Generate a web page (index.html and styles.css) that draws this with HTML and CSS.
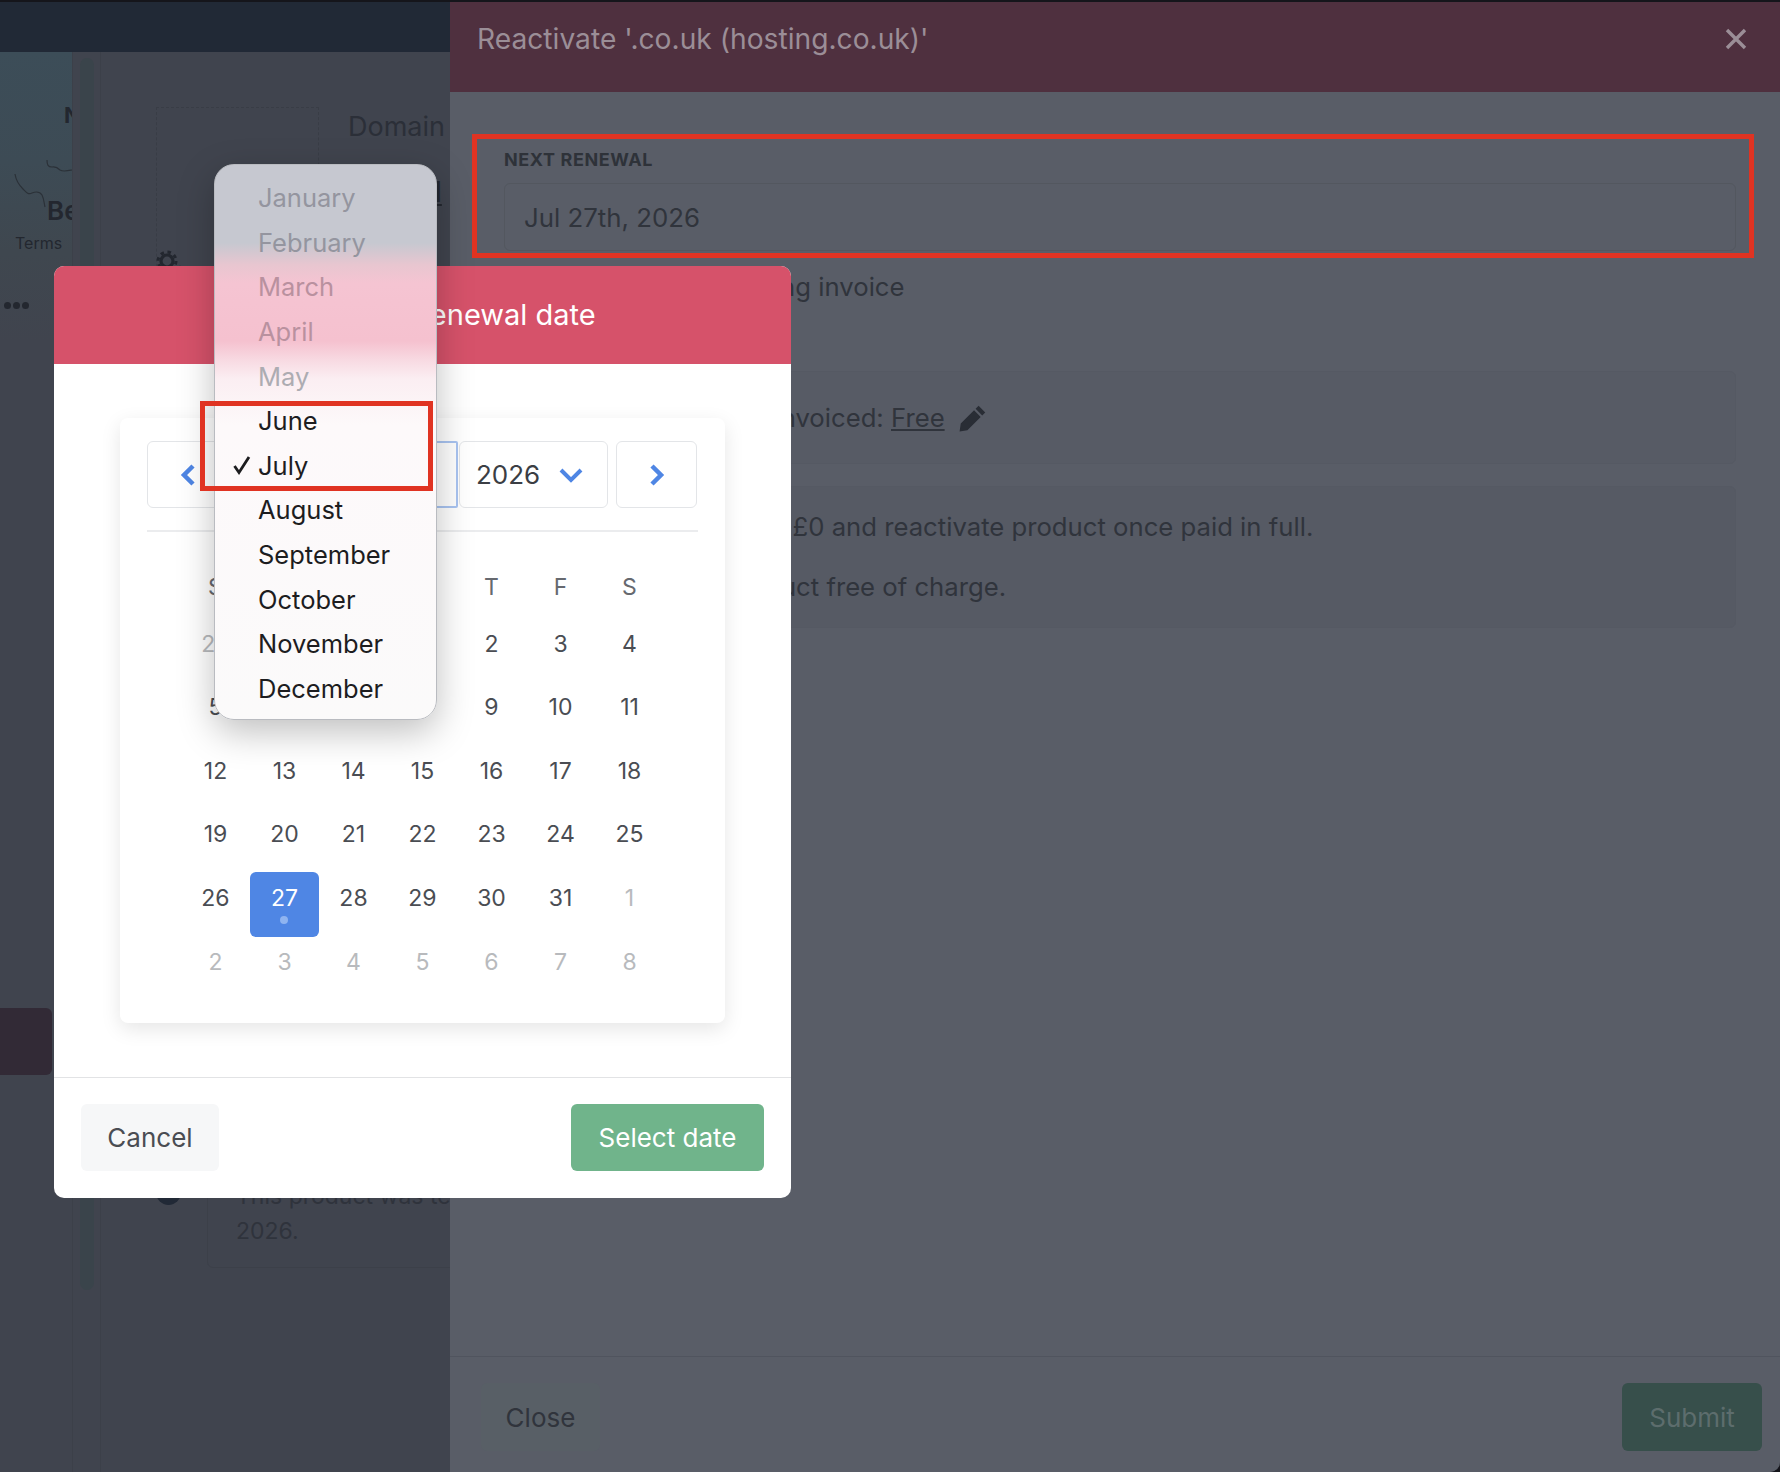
FILE: index.html
```html
<!DOCTYPE html>
<html lang="en">
<head>
  <meta charset="UTF-8">
  <title>Reactivate product</title>
  <link rel="stylesheet" href="styles.css">
</head>
<body>
  <div class="screen">

    <!-- Dimmed page behind the drawer -->
    <div class="backdrop">
      <div class="topbar"></div>
      <div class="backdrop-row">
        <aside class="rail">
          <div class="map">
            <svg class="map-lines" width="72" height="120" viewBox="0 0 72 120" fill="none" stroke="#2b3138" stroke-width="1.2">
              <path d="M15 72c1 7 4 11 8 15 3 3 5 6 9 4 5-2 8-1 10 2 2 4 2 8 3 12"/>
              <path d="M47 58c0 5 1 7 5 7 4-1 6 1 8 3 3 2 7 1 12 0"/>
            </svg>
            <span class="map-n">N</span>
            <span class="map-be">Be</span>
          </div>
          <span class="terms">Terms</span>
          <div class="dots"><i></i><i></i><i></i></div>
          <div class="plum-row"></div>
        </aside>
        <div class="scroll-rail"><div class="scroll-thumb"></div></div>
        <main class="detail">
          <div class="detail-top">
            <div class="dotted">
              <svg class="gear" width="36" height="26" viewBox="0 0 36 26" fill="none" stroke="#23272f">
                <circle cx="11" cy="12" r="6" stroke-width="3.2"/>
                <circle cx="11" cy="12" r="9" stroke-width="3" stroke-dasharray="3.5 3.6"/>
                <circle cx="24" cy="22" r="4" stroke-width="2.6"/>
              </svg>
            </div>
            <div class="detail-title">
              <span class="detail-domain">Domain name</span>
              <span class="detail-link">1</span>
            </div>
          </div>
          <div class="timeline">
            <span class="timeline-dot"></span>
            <div class="timeline-card">This product was terminated on 27 July<br>2026.</div>
          </div>
        </main>
      </div>
    </div>

    <!-- Reactivate drawer -->
    <section class="drawer">
      <header class="drawer-head">
        <h2>Reactivate '.co.uk (hosting.co.uk)'</h2>
        <svg class="drawer-close" width="24" height="24" viewBox="0 0 24 24" fill="none" stroke="#9b8e97" stroke-width="3.4">
          <path d="M3 3l18 18M21 3L3 21"/>
        </svg>
      </header>
      <div class="drawer-body">
        <label class="field-label">NEXT RENEWAL</label>
        <div class="field-input">Jul 27th, 2026</div>
        <p class="option">Generate outstanding invoice</p>
        <div class="panel panel-amount">
          <span>Total amount to be invoiced: <u>Free</u></span>
          <svg width="28" height="28" viewBox="0 0 24 24" fill="#292d35">
            <path d="M16.8 1.5l5.7 5.7-2.6 2.6-5.7-5.7zM12.9 5.4l5.7 5.7L7.2 22.5 0.5 23.5l1-6.7z"/>
          </svg>
        </div>
        <div class="panel panel-options">
          <p>Invoice customer for £0 and reactivate product once paid in full.</p>
          <p>Reactivate this product free of charge.</p>
        </div>
      </div>
      <footer class="drawer-foot">
        <button class="btn-close">Close</button>
        <button class="btn-submit">Submit</button>
      </footer>
    </section>

    <!-- Date picker modal -->
    <div class="modal">
      <header class="modal-head">Select next renewal date</header>
      <div class="modal-body">
        <div class="calendar">
          <div class="cal-nav">
            <button class="cal-arrow">
              <svg width="18" height="24" viewBox="0 0 18 24" fill="none" stroke="#4f86e4" stroke-width="4.5"><path d="M14 3l-9 9 9 9"/></svg>
            </button>
            <div class="cal-month">July</div>
            <div class="cal-year">
              <span>2026</span>
              <svg width="24" height="16" viewBox="0 0 24 16" fill="none" stroke="#4f86e4" stroke-width="4"><path d="M2 3l10 10L22 3"/></svg>
            </div>
            <button class="cal-arrow">
              <svg width="18" height="24" viewBox="0 0 18 24" fill="none" stroke="#4f86e4" stroke-width="4.5"><path d="M4 3l9 9-9 9"/></svg>
            </button>
          </div>
          <div class="cal-grid">
            <span class="wd">S</span><span class="wd">M</span><span class="wd">T</span><span class="wd">W</span><span class="wd">T</span><span class="wd">F</span><span class="wd">S</span>
            <span class="day muted">28</span><span class="day muted">29</span><span class="day muted">30</span><span class="day">1</span><span class="day">2</span><span class="day">3</span><span class="day">4</span>
            <span class="day">5</span><span class="day">6</span><span class="day">7</span><span class="day">8</span><span class="day">9</span><span class="day">10</span><span class="day">11</span>
            <span class="day">12</span><span class="day">13</span><span class="day">14</span><span class="day">15</span><span class="day">16</span><span class="day">17</span><span class="day">18</span>
            <span class="day">19</span><span class="day">20</span><span class="day">21</span><span class="day">22</span><span class="day">23</span><span class="day">24</span><span class="day">25</span>
            <span class="day">26</span><span class="day selected">27</span><span class="day">28</span><span class="day">29</span><span class="day">30</span><span class="day">31</span><span class="day muted">1</span>
            <span class="day muted">2</span><span class="day muted">3</span><span class="day muted">4</span><span class="day muted">5</span><span class="day muted">6</span><span class="day muted">7</span><span class="day muted">8</span>
          </div>
        </div>
      </div>
      <footer class="modal-foot">
        <button class="btn-cancel">Cancel</button>
        <button class="btn-select">Select date</button>
      </footer>
    </div>

    <!-- Native month menu -->
    <ul class="month-menu">
      <li class="faded">January</li>
      <li class="faded">February</li>
      <li class="faded pink">March</li>
      <li class="faded pink">April</li>
      <li class="faded">May</li>
      <li>June</li>
      <li class="checked">
        <svg width="20" height="20" viewBox="0 0 20 20" fill="none" stroke="#1d1d1f" stroke-width="2.8"><path d="M2.5 11l4.5 6.5L17 2"/></svg>
        July
      </li>
      <li>August</li>
      <li>September</li>
      <li>October</li>
      <li>November</li>
      <li>December</li>
    </ul>

    <!-- Red callouts -->
    <div class="callout callout-field"></div>
    <div class="callout callout-month"></div>
  </div>
</body>
</html>
```

FILE: styles.css
```css
* {
  margin: 0;
  padding: 0;
  box-sizing: border-box;
}

body {
  width: 1780px;
  height: 1472px;
  overflow: hidden;
  background-color: #15151b;
  font-family: 'Inter', sans-serif;
}

button {
  font-family: inherit;
  border: none;
}

.screen {
  position: relative;
  display: flex;
  width: 1780px;
  height: 1472px;
  overflow: hidden;
  background-color: #40444e;
  border-top: 2px solid #15151b;
  border-bottom-right-radius: 10px;
}

/* Page behind the drawer */
.backdrop {
  display: flex;
  flex-direction: column;
  flex: 0 0 450px;
  overflow: hidden;
}

.topbar {
  flex: 0 0 50px;
  background-color: #212936;
}

.backdrop-row {
  display: flex;
  flex: 1;
}

.rail {
  display: flex;
  flex-direction: column;
  flex: 0 0 73px;
  overflow: hidden;
  background: linear-gradient(180deg, #3c4d58 0, #3d4b55 110px, #3f474f 200px, #40444e 290px);
  border-right: 1px solid #3c4049;
}

.map {
  position: relative;
  flex: 0 0 178px;
}

.map-lines {
  position: absolute;
  top: 50px;
  left: 0;
}

.map-n,
.map-be {
  position: absolute;
  font-weight: 700;
  color: #23272f;
}

.map-n {
  top: 50px;
  left: 64px;
  font-size: 22px;
}

.map-be {
  top: 143px;
  left: 47px;
  font-size: 26px;
  font-weight: 600;
}

.terms {
  margin: 0 0 0 15px;
  font-size: 16px;
  line-height: 26px;
  color: #23272f;
}

.dots {
  display: flex;
  gap: 2px;
  margin: 46px 0 0 4px;
}

.dots i {
  width: 7px;
  height: 7px;
  border-radius: 50%;
  background-color: #23272f;
}

.plum-row {
  width: 52px;
  height: 67px;
  margin-top: 699px;
  border-radius: 0 6px 6px 0;
  background-color: #322a36;
}

.scroll-rail {
  flex: 0 0 28px;
  padding: 6px 0 0 7px;
  border-right: 1px solid #3c4049;
}

.scroll-thumb {
  width: 14px;
  height: 1232px;
  border-radius: 7px;
  background-color: #3a444b;
}

.detail {
  display: flex;
  flex-direction: column;
  justify-content: space-between;
  flex: 1;
  padding: 55px 0 204px 55px;
}

.detail-top {
  display: flex;
  gap: 29px;
}

.dotted {
  position: relative;
  width: 163px;
  height: 180px;
  border: 1px dashed #393d46;
  border-bottom: none;
}

.gear {
  position: absolute;
  top: 141px;
  left: -1px;
}

.detail-title {
  display: flex;
  flex-direction: column;
  flex: none;
  padding-top: 2px;
  white-space: nowrap;
}

.detail-domain {
  font-size: 27px;
  line-height: 36px;
  color: #2b2f38;
}

.detail-link {
  margin: 32px 0 0 82px;
  font-size: 28px;
  font-weight: 600;
  line-height: 30px;
  color: #23272f;
  text-decoration: underline;
}

.timeline {
  display: flex;
  gap: 26px;
}

.timeline-dot {
  flex: none;
  width: 25px;
  height: 25px;
  margin-top: 24px;
  border-radius: 50%;
  background-color: #212936;
}

.timeline-card {
  flex: none;
  width: 420px;
  padding: 22px 0 18px 28px;
  font-size: 23px;
  line-height: 35px;
  white-space: nowrap;
  color: #2f333c;
  border: 1px solid #3c4049;
  border-radius: 6px;
}

/* Drawer */
.drawer {
  display: flex;
  flex-direction: column;
  flex: 1;
  background-color: #595d67;
}

.drawer-head {
  display: flex;
  align-items: center;
  justify-content: space-between;
  height: 90px;
  padding: 0 32px 16px 27px;
  background-color: #4f303f;
}

.drawer-head h2 {
  font-size: 28.2px;
  font-weight: 400;
  color: #9b8e97;
}

.drawer-body {
  flex: 1;
  padding: 56px 44px 0 54px;
}

.field-label {
  display: block;
  font-size: 18px;
  font-weight: 700;
  line-height: 24px;
  letter-spacing: 0.6px;
  color: #2e3239;
}

.field-input {
  display: flex;
  align-items: center;
  height: 68px;
  margin-top: 11px;
  padding-left: 19px;
  font-size: 25.8px;
  color: #30343c;
  border: 1px solid #53575f;
  border-radius: 6px;
}

.option {
  margin: 18px 0 0 45px;
  font-size: 25.7px;
  line-height: 36px;
  color: #30343c;
}

.panel {
  font-size: 25.7px;
  color: #30343c;
  border: 1px solid #555963;
  border-radius: 6px;
}

.panel-amount {
  display: flex;
  align-items: center;
  gap: 14px;
  height: 93px;
  margin-top: 66px;
  padding-left: 36px;
  background-color: #575b65;
}

.panel-options {
  height: 142px;
  margin-top: 22px;
  padding: 22px 0 0 31px;
  background-color: #565a64;
}

.panel-options p {
  line-height: 36px;
}

.panel-options p + p {
  margin-top: 24px;
  padding-left: 4px;
}

.drawer-foot {
  display: flex;
  align-items: flex-start;
  justify-content: space-between;
  height: 116px;
  padding: 26px 18px 0 31px;
  border-top: 1px solid #50545e;
}

.btn-close,
.btn-submit {
  height: 68px;
  font-size: 26px;
  border-radius: 6px;
}

.btn-close {
  width: 119px;
  color: #30343c;
  background-color: #585f66;
}

.btn-submit {
  width: 140px;
  color: #5d6d6d;
  background-color: #374f4b;
}

/* Date picker modal */
.modal {
  position: absolute;
  top: 264px;
  left: 54px;
  display: flex;
  flex-direction: column;
  width: 737px;
  height: 932px;
  overflow: hidden;
  background-color: #fff;
  border-radius: 10px;
}

.modal-head {
  flex: 0 0 98px;
  padding-left: 9px;
  font-size: 29px;
  line-height: 98px;
  text-align: center;
  color: #fff;
  background-color: #d6526a;
}

.modal-body {
  flex: 1;
  padding: 54px 66px;
}

.calendar {
  height: 605px;
  padding: 23px 27px 0;
  background-color: #fff;
  border-radius: 8px;
  box-shadow: 0 6px 20px rgba(0, 0, 0, 0.1);
}

.cal-nav {
  display: flex;
  height: 91px;
  padding-bottom: 24px;
  border-bottom: 2px solid #ebecee;
}

.cal-arrow,
.cal-month,
.cal-year {
  height: 67px;
  background-color: #fff;
  border: 1px solid #e3e5e8;
  border-radius: 6px;
}

.cal-arrow {
  display: flex;
  align-items: center;
  justify-content: center;
  flex: 0 0 81px;
}

.cal-month {
  flex: 0 0 222px;
  margin: 0 1px 0 8px;
  line-height: 65px;
  padding-left: 24px;
  font-size: 26px;
  border: 2px solid #a9c4f1;
  border-radius: 2px;
  color: #3b3e44;
}

.cal-year {
  display: flex;
  align-items: center;
  gap: 19px;
  flex: 0 0 149px;
  margin-right: 8px;
  padding-left: 16px;
  font-size: 26px;
  color: #3b3e44;
}

.cal-grid {
  display: grid;
  grid-template-columns: repeat(7, 69px);
  grid-auto-rows: 63.6px;
  justify-content: center;
  margin-top: 22px;
}

.wd,
.day {
  font-size: 23px;
  text-align: center;
  color: #4a4d53;
}

.wd {
  height: 60px;
  line-height: 66px;
  font-weight: 400;
  color: #66696f;
}

.day {
  line-height: 52px;
}

.muted {
  color: #b8babd;
}

.selected {
  position: relative;
  height: 65px;
  color: #fff;
  background-color: #4f86e4;
  border-radius: 6px;
}

.selected::after {
  content: '';
  position: absolute;
  bottom: 13px;
  left: 30px;
  width: 8px;
  height: 8px;
  border-radius: 50%;
  background-color: #8fb4f0;
}

.modal-foot {
  display: flex;
  align-items: center;
  justify-content: space-between;
  flex: 0 0 121px;
  padding: 0 27px 2px;
  border-top: 1.5px solid #e2e3e5;
}

.btn-cancel,
.btn-select {
  height: 67px;
  font-size: 26px;
  border-radius: 6px;
}

.btn-cancel {
  width: 138px;
  color: #4a4d53;
  background-color: #f6f7f8;
}

.btn-select {
  width: 193px;
  color: #fff;
  background-color: #70b48b;
}

/* Month menu */
.month-menu {
  position: absolute;
  top: 162px;
  left: 214px;
  width: 223px;
  height: 556px;
  padding-top: 11px;
  list-style: none;
  border: 1px solid #b9bbc0;
  border-radius: 20px;
  box-shadow: 0 12px 36px rgba(0, 0, 0, 0.25);
  background: linear-gradient(180deg,
    #c6c8d0 0,
    #c6c8d0 78px,
    #e8c6d0 100px,
    #f5c4d2 118px,
    #f5c1cf 176px,
    #f8dbe3 196px,
    #fbeef2 214px,
    #fdf9fa 260px,
    #fbfafa 100%);
}

.month-menu li {
  position: relative;
  height: 44.65px;
  padding-left: 43px;
  font-size: 25.5px;
  line-height: 44.65px;
  color: #1d1d1f;
}

.month-menu .faded {
  color: #94959f;
}

.month-menu .pink {
  color: #b9919f;
}

.month-menu li:nth-child(5) {
  color: #adacb2;
}

.checked svg {
  position: absolute;
  top: 11px;
  left: 17px;
}

/* Red callouts */
.callout {
  position: absolute;
  border: 5px solid #e03322;
}

.callout-field {
  top: 132px;
  left: 472px;
  width: 1282px;
  height: 124px;
}

.callout-month {
  top: 399px;
  left: 200px;
  width: 233px;
  height: 90px;
}
```
